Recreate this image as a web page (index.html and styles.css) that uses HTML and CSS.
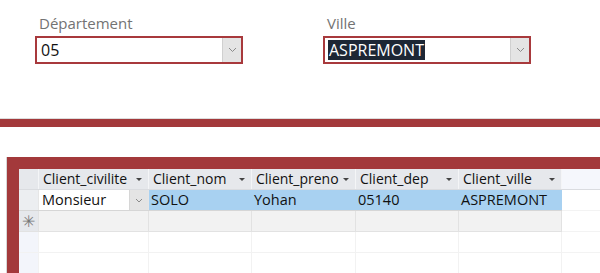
FILE: index.html
```html
<!DOCTYPE html>
<html lang='fr'>
<head>
  <title>Clients par ville</title>
  <link rel="stylesheet" href="styles.css">
</head>
<body>
  <!-- Listes de choix -->
  <div class='filters'>
    <div class='field'>
      <label>Département</label>
      <div class='combo'>
        <span class='value'>05</span>
        <span class='drop'>
          <svg width='9' height='6' viewBox='0 0 9 6'><polyline points='1,1 4.5,4.5 8,1' fill='none' stroke='#8a8a8a' stroke-width='1'/></svg>
        </span>
      </div>
    </div>
    <div class='field'>
      <label>Ville</label>
      <div class='combo'>
        <span class='value selected'>ASPREMONT</span>
        <span class='drop'>
          <svg width='9' height='6' viewBox='0 0 9 6'><polyline points='1,1 4.5,4.5 8,1' fill='none' stroke='#8a8a8a' stroke-width='1'/></svg>
        </span>
      </div>
    </div>
  </div>

  <div class='separator'></div>

  <!-- Sous-formulaire -->
  <div class='subform'>
    <table class='grid'>
      <tr class='head'>
        <th class='sel'></th>
        <th><div class='hcell'><span>Client_civilite</span><i class='tri'></i></div></th>
        <th><div class='hcell'><span>Client_nom</span><i class='tri'></i></div></th>
        <th><div class='hcell'><span>Client_preno</span><i class='tri'></i></div></th>
        <th><div class='hcell'><span>Client_dep</span><i class='tri'></i></div></th>
        <th><div class='hcell'><span>Client_ville</span><i class='tri'></i></div></th>
        <th class='rest'></th>
      </tr>
      <tr class='current'>
        <td class='sel'></td>
        <td class='edit'>
          <div class='cellcombo'>Monsieur<span class='drop small'><svg width='8' height='5' viewBox='0 0 8 5'><polyline points='1,1 4,4 7,1' fill='none' stroke='#8a8a8a' stroke-width='1'/></svg></span></div>
        </td>
        <td class='hl'>SOLO</td>
        <td class='hl'>Yohan</td>
        <td class='hl'>05140</td>
        <td class='hl'>ASPREMONT</td>
        <td class='rest'></td>
      </tr>
      <tr class='newrow'>
        <td class='sel'>&#x2733;</td>
        <td></td><td></td><td></td><td></td><td></td>
        <td class='rest'></td>
      </tr>
      <tr class='empty'>
        <td class='sel'></td>
        <td></td><td></td><td></td><td></td><td></td>
        <td class='rest'></td>
      </tr>
      <tr class='empty'>
        <td class='sel'></td>
        <td></td><td></td><td></td><td></td><td></td>
        <td class='rest'></td>
      </tr>
    </table>
  </div>
</body>
</html>
```

FILE: styles.css
```css
body {
  margin: 0;
  background-color: white;
  font-family: 'Open Sans', 'Noto Sans', sans-serif;
  color: #111;
}

.filters {
  display: flex;
  gap: 80px;
  padding: 12px 0 0 35px;
}

.field {
  width: 208px;
}

.field label {
  display: block;
  font-size: 15px;
  line-height: 22px;
  color: #737373;
  padding-left: 4px;
  margin-bottom: 2px;
}

.combo {
  box-sizing: border-box;
  height: 28px;
  border: 2px solid #a8393c;
  display: flex;
  align-items: center;
  justify-content: space-between;
  padding: 0 0 0 3px;
}

.combo .value {
  font-size: 16px;
  line-height: 20px;
  padding: 0 1px;
}

.combo .value.selected {
  background-color: #1d2735;
  color: white;
}

.drop {
  box-sizing: border-box;
  width: 19px;
  height: 24px;
  background-color: #e4e4e4;
  border-left: 1px solid #d0d0d0;
  display: flex;
  align-items: center;
  justify-content: center;
}

.separator {
  margin-top: 54px;
  height: 8px;
  background-color: #a3393b;
  border-top: 1px solid #dcdcdc;
}

.subform {
  margin: 30px 0 0 6px;
  border-left: 1px solid #d6d6d6;
  padding: 0;
}

.grid {
  border-collapse: collapse;
  border-top: 12px solid #a3393b;
  border-left: 12px solid #a3393b;
  width: 100%;
  font-size: 14.5px;
  table-layout: fixed;
}

.grid th,
.grid td {
  padding: 0;
  height: 20px;
  line-height: 20px;
  text-align: left;
  font-weight: normal;
  white-space: nowrap;
  overflow: hidden;
  border-right: 1px solid #e6e6e6;
  border-bottom: 1px solid #e6e6e6;
}

.grid th:nth-child(2), .grid td:nth-child(2) { width: 109px; }
.grid th:nth-child(3), .grid td:nth-child(3) { width: 102px; }
.grid th:nth-child(4), .grid td:nth-child(4) { width: 103px; }
.grid th:nth-child(5), .grid td:nth-child(5) { width: 102px; }
.grid th:nth-child(6), .grid td:nth-child(6) { width: 102px; }

.grid .sel {
  width: 19px;
  background-color: #f3f5fb;
  text-align: center;
  color: #777;
  font-size: 16px;
}

.head th {
  background-color: #e6e8ec;
  border-right: 1px solid #f4f5f7;
  border-bottom: 1px solid #dadce0;
  height: 20px;
  font-size: 14px;
}

.head th.sel {
  background-color: #e6e8ec;
}

.head th.rest {
  background-color: #f5f7fc;
  border-right: none;
}

.hcell {
  display: flex;
  align-items: center;
  padding: 0 6px 0 4px;
}

.hcell span {
  flex: 1;
}

.tri {
  flex: none;
  margin-left: 3px;
  width: 0;
  height: 0;
  border-left: 3px solid transparent;
  border-right: 3px solid transparent;
  border-top: 3px solid #444;
}

.current td.hl {
  background-color: #a8d1f1;
  padding-left: 2px;
  border-right-color: #a8d1f1;
  border-bottom-color: #d6d6d6;
}

.current td.sel {
  background-color: #eceef1;
  border-bottom-color: #d6d6d6;
}

.current td.edit {
  background-color: white;
  border-bottom-color: #d6d6d6;
}

.cellcombo {
  display: flex;
  align-items: center;
  justify-content: space-between;
  padding-left: 3px;
}

.drop.small {
  width: 19px;
  height: 20px;
  border-left: 1px solid #d6d6d6;
}

.newrow td {
  background-color: #f2f2f2;
  border-right-color: #e2e2e2;
  border-bottom-color: #e2e2e2;
}

.newrow td.sel {
  background-color: #e6e8ec;
}

.grid td.rest {
  background-color: white;
  border-right: none;
  border-bottom-color: #f3f3f3;
}

.empty td {
  border-right-color: #f2f2f2;
  border-bottom-color: #f2f2f2;
}
```
